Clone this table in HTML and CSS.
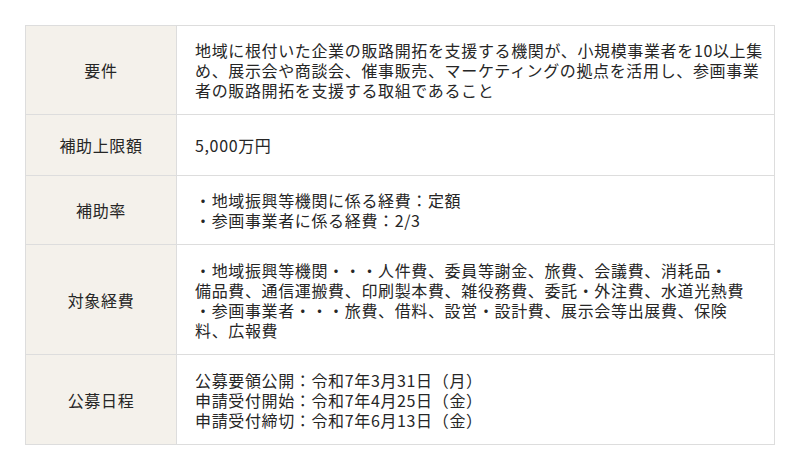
FILE: index.html
```html
<!DOCTYPE html>
<html lang="ja">
<head>
<meta charset="utf-8">
<title>補助事業の概要</title>
<link rel="stylesheet" href="styles.css">
</head>
<body>
<div class="wrap">
  <table class="spec">
    <tbody>
      <tr>
        <th>要件</th>
        <td>地域に根付いた企業の販路開拓を支援する機関が、小規模事業者を10以上集め、展示会や商談会、催事販売、マーケティングの拠点を活用し、参画事業者の販路開拓を支援する取組であること</td>
      </tr>
      <tr>
        <th>補助上限額</th>
        <td>5,000万円</td>
      </tr>
      <tr>
        <th>補助率</th>
        <td><p>・地域振興等機関に係る経費：定額</p><p>・参画事業者に係る経費：2/3</p></td>
      </tr>
      <tr>
        <th>対象経費</th>
        <td><p>・地域振興等機関・・・人件費、委員等謝金、旅費、会議費、消耗品・<br>備品費、通信運搬費、印刷製本費、雑役務費、委託・外注費、水道光熱費</p><p>・参画事業者・・・旅費、借料、設営・設計費、展示会等出展費、保険<br>料、広報費</p></td>
      </tr>
      <tr>
        <th>公募日程</th>
        <td><p>公募要領公開：令和7年3月31日（月）</p><p>申請受付開始：令和7年4月25日（金）</p><p>申請受付締切：令和7年6月13日（金）</p></td>
      </tr>
    </tbody>
  </table>
</div>
</body>
</html>
```

FILE: styles.css
```css
html, body {
  margin: 0;
  padding: 0;
  background: #ffffff;
}

body {
  font-family: "Noto Sans CJK JP", "Noto Sans", sans-serif;
  color: #262626;
  font-size: 16px;
  line-height: 20px;
}

.wrap {
  padding: 25px;
}

.spec {
  width: 750px;
  border-collapse: collapse;
  table-layout: fixed;
}

.spec th,
.spec td {
  border: 1px solid #dddddd;
  vertical-align: middle;
}

.spec th {
  width: 151px;
  box-sizing: border-box;
  background: #f4f1eb;
  font-weight: normal;
  text-align: center;
  padding: 20px 0;
  letter-spacing: 0.04em;
}

.spec td {
  text-align: left;
  padding: 14px 6px 14px 18px;
  letter-spacing: 0.04em;
}

.spec tr:nth-child(4) td,
.spec tr:nth-child(5) td {
  padding-top: 14.5px;
  padding-bottom: 14.5px;
}

.spec p {
  margin: 0;
}
```
